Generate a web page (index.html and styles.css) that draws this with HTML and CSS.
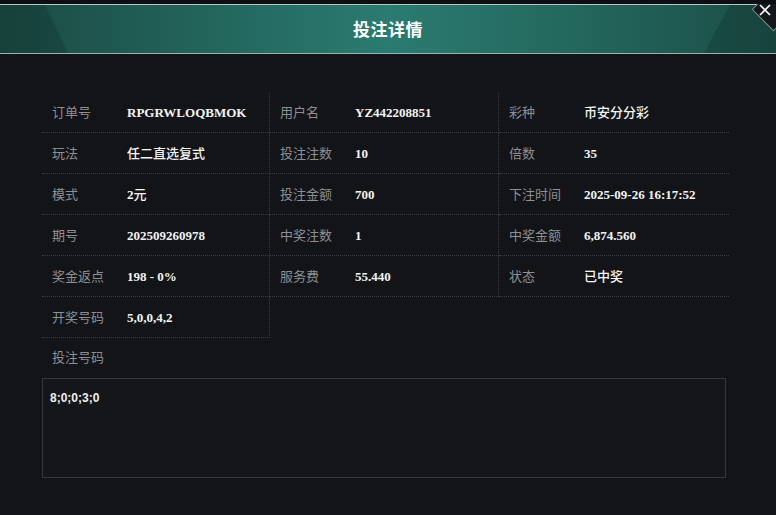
FILE: index.html
```html
<!DOCTYPE html>
<html lang="zh-CN">
<head>
<meta charset="utf-8">
<title>投注详情</title>
<link rel="stylesheet" href="styles.css">
</head>
<body>
<div class="dialog">
  <header class="head">
    <h1 class="title">投注详情</h1>
  </header>
  <button class="close" aria-label="关闭">
    <svg class="close-x" width="16" height="16" viewBox="0 0 16 16"><path d="M3 3 L13 13 M13 3 L3 13" stroke="#ffffff" stroke-width="1.6" fill="none"/></svg>
  </button>
  <main class="body">
    <div class="grid">
      <div class="cell"><span class="label">订单号</span><span class="value">RPGRWLOQBMOK</span></div>
      <div class="cell"><span class="label">用户名</span><span class="value">YZ442208851</span></div>
      <div class="cell last"><span class="label">彩种</span><span class="value cjk">币安分分彩</span></div>

      <div class="cell"><span class="label">玩法</span><span class="value cjk">任二直选复式</span></div>
      <div class="cell"><span class="label">投注注数</span><span class="value">10</span></div>
      <div class="cell last"><span class="label">倍数</span><span class="value">35</span></div>

      <div class="cell"><span class="label">模式</span><span class="value">2<span class="cjk">元</span></span></div>
      <div class="cell"><span class="label">投注金额</span><span class="value">700</span></div>
      <div class="cell last"><span class="label">下注时间</span><span class="value">2025-09-26 16:17:52</span></div>

      <div class="cell"><span class="label">期号</span><span class="value">202509260978</span></div>
      <div class="cell"><span class="label">中奖注数</span><span class="value">1</span></div>
      <div class="cell last"><span class="label">中奖金额</span><span class="value">6,874.560</span></div>

      <div class="cell"><span class="label">奖金返点</span><span class="value">198 - 0%</span></div>
      <div class="cell"><span class="label">服务费</span><span class="value">55.440</span></div>
      <div class="cell last"><span class="label">状态</span><span class="value cjk">已中奖</span></div>

      <div class="cell"><span class="label">开奖号码</span><span class="value">5,0,0,4,2</span></div>
    </div>
    <div class="code-label">投注号码</div>
    <div class="code-box">8;0;0;3;0</div>
  </main>
</div>
</body>
</html>
```
FILE: styles.css
```css
html, body {
  margin: 0;
  padding: 0;
  background: #111317;
}
body {
  font-family: "Noto Sans CJK SC", "Liberation Sans", sans-serif;
  width: 776px;
  height: 515px;
  overflow: hidden;
}
.dialog {
  position: relative;
  width: 776px;
  height: 515px;
  background: #121418;
  border-top: 4px solid #0d0f13;
  box-sizing: border-box;
  overflow: hidden;
}
.head {
  position: relative;
  height: 50px;
  box-sizing: border-box;
  border-top: 1px solid #b9c7c4;
  border-bottom: 1px solid #9db1ad;
  background: linear-gradient(90deg, #1b4a44 0%, #22635a 25%, #2b7b70 50%, #23665c 75%, #1b4e47 100%);
  display: flex;
  align-items: center;
  justify-content: center;
  overflow: hidden;
}
.head::before,
.head::after {
  content: "";
  position: absolute;
  top: 0;
  bottom: 0;
  width: 80px;
  background: rgba(10, 30, 28, 0.22);
}
.head::before {
  left: 0;
  clip-path: polygon(0 0, 45px 0, 68px 100%, 0 100%);
}
.head::after {
  right: 0;
  clip-path: polygon(34px 0, 80px 0, 80px 100%, 8px 100%);
}
.title {
  margin: 0;
  font-size: 17px;
  font-weight: 700;
  color: #ffffff;
  letter-spacing: 0.5px;
  line-height: 20px;
  position: relative;
  z-index: 1;
}
.close {
  position: absolute;
  top: -14px;
  right: -16px;
  width: 38px;
  height: 38px;
  padding: 0;
  border: none;
  background: transparent;
  cursor: pointer;
}
.close::before {
  content: "";
  position: absolute;
  left: 4px;
  top: 4px;
  width: 29px;
  height: 29px;
  background: #16191c;
  border: 1px solid #7e8f8c;
  transform: rotate(45deg);
}
.close-x {
  position: absolute;
  left: 3px;
  top: 12px;
}
.body {
  padding: 38px 0 0 42px;
}
.grid {
  display: grid;
  grid-template-columns: 228px 229px 230px;
  width: 687px;
}
.cell {
  height: 41px;
  box-sizing: border-box;
  border-bottom: 1px dotted #3a3d41;
  border-right: 1px dotted #3a3d41;
  padding-left: 10px;
  line-height: 40px;
  font-size: 13px;
  white-space: nowrap;
}
.cell.last {
  border-right: none;
}
.label {
  display: inline-block;
  width: 75px;
  color: #8d8f92;
}
.value {
  font-family: "Liberation Serif", "Noto Sans CJK SC", serif;
  font-weight: 700;
  color: #f4f4f4;
}
.cjk {
  font-family: "Noto Sans CJK SC", sans-serif;
  font-weight: 500;
}
.code-label {
  margin-top: 9px;
  padding-left: 10px;
  font-size: 13px;
  line-height: 20px;
  color: #8d8f92;
}
.code-box {
  margin-top: 11px;
  width: 684px;
  height: 100px;
  box-sizing: border-box;
  border: 1px solid #35383c;
  background: #14161a;
  padding: 12px 0 0 7px;
  font-family: "Liberation Sans", sans-serif;
  font-weight: 700;
  font-size: 12px;
  line-height: 14px;
  color: #f0f0f0;
}
```
